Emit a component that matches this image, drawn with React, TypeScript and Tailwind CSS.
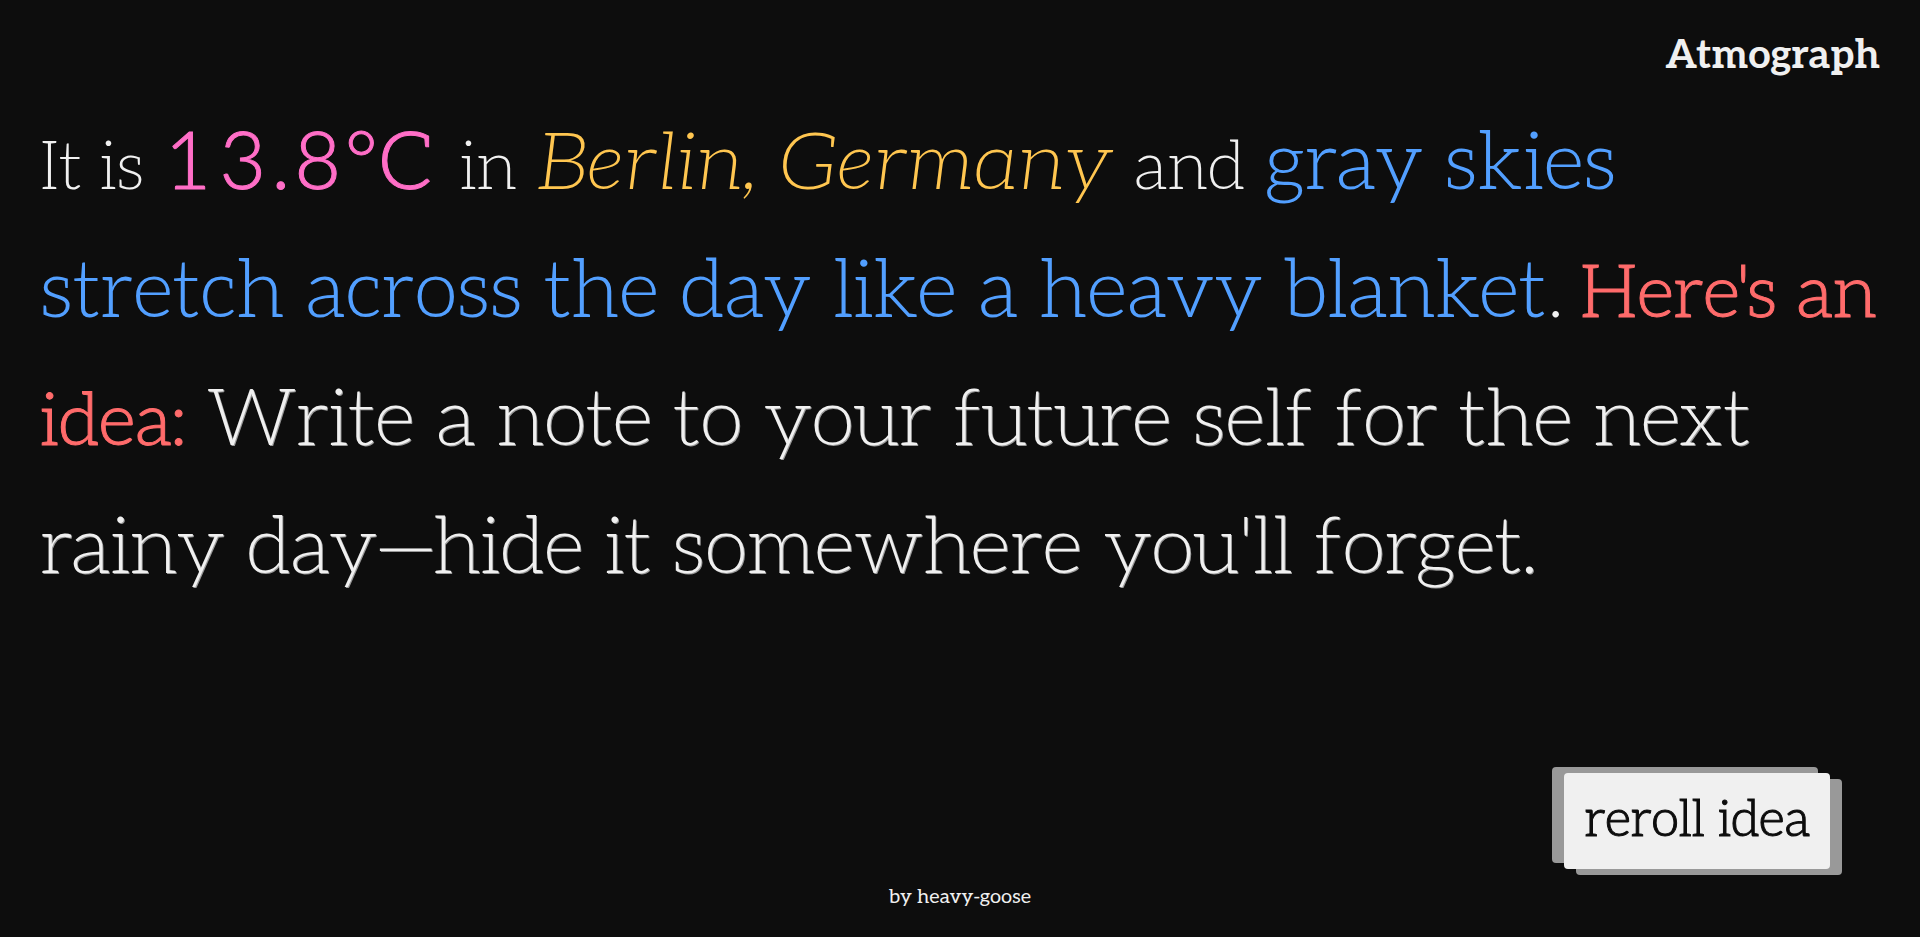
export default function App() {
  return (
    <div className="flex min-h-screen flex-col bg-[#0d0d0d] px-10 text-[#f0f0f0] font-['Aleo','Liberation_Serif',serif]">
      <header className="flex justify-end pt-8">
        <h1 className="text-[40px] leading-[48px] font-bold">Atmograph</h1>
      </header>
      <main className="flex flex-1 flex-col justify-between pt-[21px]">
        <p className="text-[68px] leading-[1.6] font-extralight">
          It is{' '}
          <span className="mx-[3px] text-[80px] font-light tracking-[6px] text-[#ff6ec7] [-webkit-text-stroke:1px_#ff6ec7]">13.8°C</span>{' '}
          in <em className="mx-[3px] text-[80px] text-[#ffc650]">Berlin, Germany</em> and{' '}
          <span className="mx-[3px] text-[80px] font-light text-[#529fff]">
            gray skies stretch across the day like a heavy blanket
          </span>
          <span className="font-light">.</span>{' '}
          <span className="mr-[3px] text-[73px] font-light text-[#ff6b6b] [-webkit-text-stroke:1px_#ff6b6b]">Here's an idea:</span>{' '}
          <span className="text-[80px] [text-shadow:1px_1px_0_#999999]">
            Write a note to your future self for the next rainy day—hide it somewhere you'll forget.
          </span>
        </p>
        <div className="flex justify-end pr-[50px]">
          <button
            type="button"
            className="rounded bg-[#f0f0f0] px-5 py-3 text-[51px] leading-[72px] font-light text-[#0d0d0d] shadow-[12px_6px_0_#999999,-12px_-6px_0_#999999] [-webkit-text-stroke:1px_#0d0d0d]"
          >
            reroll idea
          </button>
        </div>
      </main>
      <footer className="pt-3 pb-6 text-center text-[20px] leading-8">by heavy-goose</footer>
    </div>
  );
}
